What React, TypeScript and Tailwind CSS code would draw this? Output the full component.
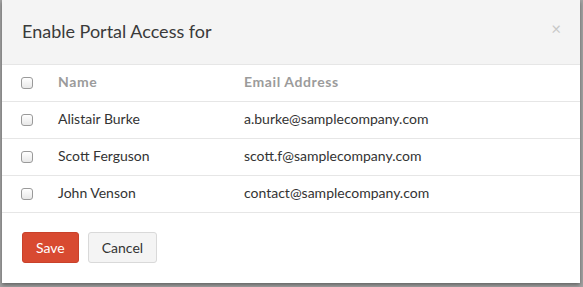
import React from 'react'

const PEOPLE = [
  { name: 'Alistair Burke', email: 'a.burke@samplecompany.com' },
  { name: 'Scott Ferguson', email: 'scott.f@samplecompany.com' },
  { name: 'John Venson', email: 'contact@samplecompany.com' },
]

function Box() {
  return (
    <span className="block w-[12px] h-[12px] rounded-[3px] border border-[#9a9a9a] bg-gradient-to-b from-white to-[#e8e8e8]" />
  )
}

export default function App() {
  return (
    <div className="w-[583px] h-[287px] bg-[#a3a3a3] pl-[2px] pr-[3px] pb-[4px] overflow-hidden" style={{ fontFamily: 'Lato, "Open Sans", sans-serif' }}>
      <div className="h-full bg-white flex flex-col shadow-[0_2px_4px_rgba(0,0,0,0.4)]">
        <div className="h-[65px] bg-[#f4f4f4] border-b border-[#e6e6e6] flex items-center justify-between pl-[20px] pr-[19px] pb-[2px]">
          <h2 className="text-[18px] text-[#3a3a3a] font-normal">Enable Portal Access for</h2>
          <span className="text-[#c8c8c8] text-[17px] leading-none mb-[6px]">×</span>
        </div>
        <div className="flex flex-col">
          <div className="h-[37px] flex items-center border-b border-[#e6e6e6] pl-[19px]">
            <div className="w-[37px]"><Box /></div>
            <div className="w-[186px] text-[14px] font-bold text-[#9b9b9b] tracking-[0.6px] pb-[3px]">Name</div>
            <div className="text-[14px] font-bold text-[#9b9b9b] tracking-[0.6px] pb-[3px]">Email Address</div>
          </div>
          {PEOPLE.map(p => (
            <div key={p.name} className="h-[37px] flex items-center border-b border-[#e6e6e6] pl-[19px]">
              <div className="w-[37px]"><Box /></div>
              <div className="w-[186px] text-[14px] text-[#333] pb-[3px]">{p.name}</div>
              <div className="text-[14px] text-[#333] pb-[3px]">{p.email}</div>
            </div>
          ))}
        </div>
        <div className="flex gap-[9px] pl-[20px] pt-[19px]">
          <button className="h-[31px] px-[13px] rounded-[3px] bg-[#d84a31] border border-[#c9412a] text-white text-[14px]">Save</button>
          <button className="h-[31px] px-[13px] rounded-[3px] bg-[#f4f4f4] border border-[#d9d9d9] text-[#333] text-[14px]">Cancel</button>
        </div>
      </div>
    </div>
  )
}
